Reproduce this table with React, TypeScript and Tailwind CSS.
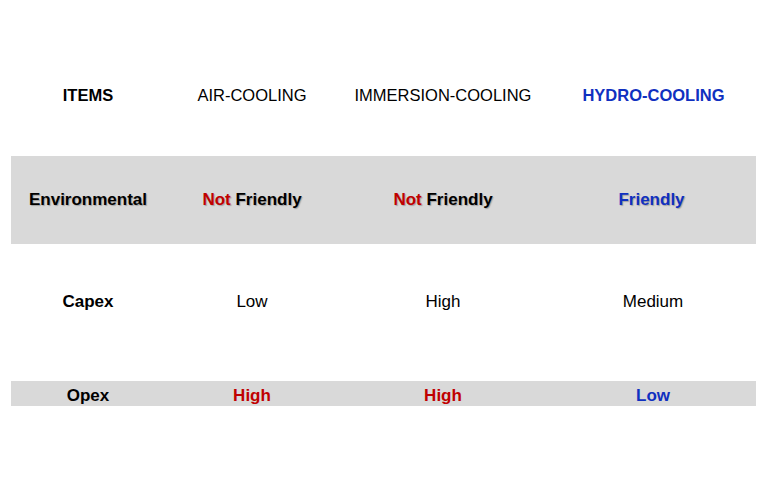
import React from 'react';

const RED = 'text-[#c00000]';
const BLUE = 'text-[#1030c0]';

export default function App() {
  return (
    <div className="w-[767px] h-[483px] bg-white font-['Liberation_Sans',Arial,sans-serif] text-black">
      <div className="pt-[34px] px-[11px]">
        {/* Header */}
        <div className="grid grid-cols-[154px_174px_208px_1fr] h-[122px] items-center text-center text-[16.5px]">
          <div className="font-bold">ITEMS</div>
          <div>AIR-COOLING</div>
          <div>IMMERSION-COOLING</div>
          <div className={`font-bold pl-[4px] ${BLUE}`}>HYDRO-COOLING</div>
        </div>

        {/* Environmental */}
        <div className="grid grid-cols-[154px_174px_208px_1fr] h-[88px] items-center text-center text-[17px] font-bold bg-[#d9d9d9] [text-shadow:1px_1px_1px_rgba(0,0,0,0.25)]">
          <div>Environmental</div>
          <div>
            <span className={RED}>Not</span> Friendly
          </div>
          <div>
            <span className={RED}>Not</span> Friendly
          </div>
          <div className={BLUE}>Friendly</div>
        </div>

        {/* Capex */}
        <div className="grid grid-cols-[154px_174px_208px_1fr] h-[114px] pt-[2px] items-center text-center text-[17px]">
          <div className="font-bold">Capex</div>
          <div>Low</div>
          <div>High</div>
          <div className="pl-[3px]">Medium</div>
        </div>

        <div className="h-[23px]" />

        {/* Opex */}
        <div className="grid grid-cols-[154px_174px_208px_1fr] h-[25px] pt-[2px] items-center text-center text-[17px] font-bold bg-[#d9d9d9]">
          <div>Opex</div>
          <div className={RED}>High</div>
          <div className={RED}>High</div>
          <div className={`pl-[3px] ${BLUE}`}>Low</div>
        </div>
      </div>
    </div>
  );
}
